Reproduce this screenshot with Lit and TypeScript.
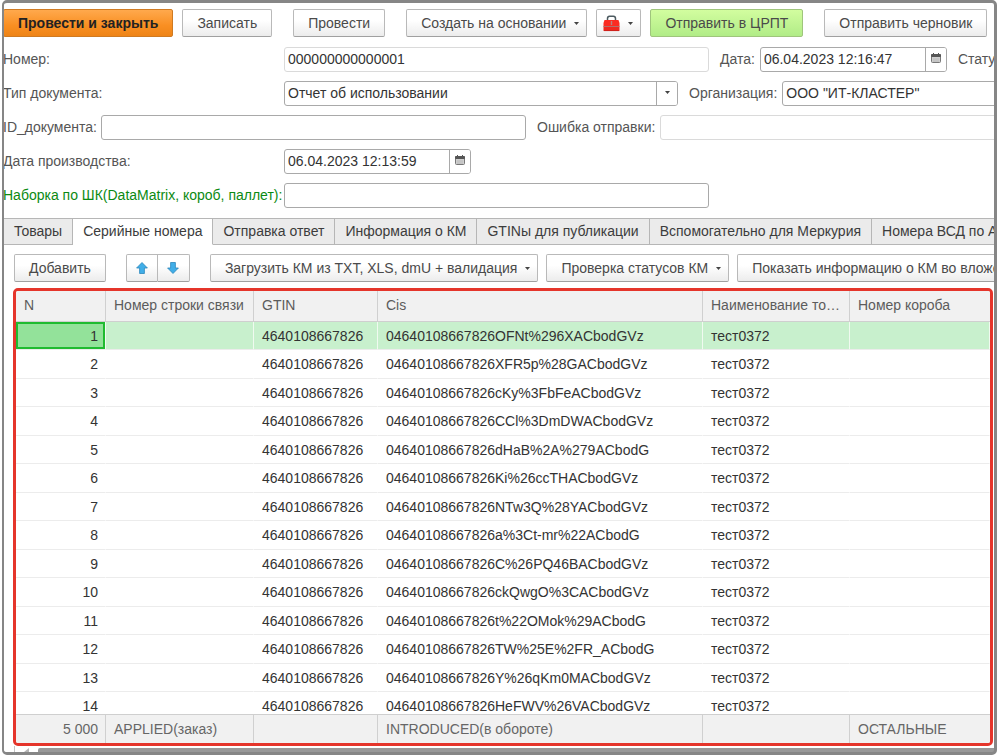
import { LitElement, html, css, svg, nothing } from "lit";
import { customElement, property, state } from "lit/decorators.js";
import { classMap } from "lit/directives/class-map.js";

const CODES = [
  "04640108667826OFNt%296XACbodGVz",
  "04640108667826XFR5p%28GACbodGVz",
  "04640108667826cKy%3FbFeACbodGVz",
  "04640108667826CCl%3DmDWACbodGVz",
  "04640108667826dHaB%2A%279ACbodG",
  "04640108667826Ki%26ccTHACbodGVz",
  "04640108667826NTw3Q%28YACbodGVz",
  "04640108667826a%3Ct-mr%22ACbodG",
  "04640108667826C%26PQ46BACbodGVz",
  "04640108667826ckQwgO%3CACbodGVz",
  "04640108667826t%22OMok%29ACbodG",
  "04640108667826TW%25E%2FR_ACbodG",
  "04640108667826Y%26qKm0MACbodGVz",
  "04640108667826HeFWV%26VACbodGVz",
];

const TABS = [
  "Товары",
  "Серийные номера",
  "Отправка ответ",
  "Информация о КМ",
  "GTINы для публикации",
  "Вспомогательно для Меркурия",
  "Номера ВСД по А",
];

const caret = html`<svg class="caret" width="5" height="3" viewBox="0 0 5 3" aria-hidden="true">
  <path d="M0 0H5L2.5 3Z" fill="#444" />
</svg>`;

const calendar = html`<svg width="10" height="11" viewBox="0 0 10 11" aria-hidden="true">
  <rect x="0.5" y="1.5" width="9" height="8" rx="1" fill="#cfcfcf" stroke="#777" />
  <rect x="0" y="1" width="10" height="3" rx="1" fill="#555" />
  <path d="M2.5 0V2M7.5 0V2" stroke="#555" />
  <path d="M2 6H8M2 8H8" stroke="#bababa" />
</svg>`;

const toolbox = html`<svg width="17" height="17" viewBox="0 0 17 17" aria-hidden="true">
  <path d="M4.5 6V3.6Q4.5 1.2 6.6 1.2H10.4Q12.5 1.2 12.5 3.6V6" fill="none" stroke="#4c5a60" stroke-width="1.5" />
  <path d="M1.5 5H15.5L16.5 8V11H0.5V8Z" fill="#fb2c22" />
  <rect x="0.5" y="11" width="16" height="5" rx="0.5" fill="#f0281f" />
  <path d="M0.5 11.5H16.5" stroke="#b0706b" />
  <path d="M1 15.6H16" stroke="#c2201a" stroke-width="0.8" />
  <path d="M8.5 6V10" stroke="#b98580" stroke-width="1.4" />
</svg>`;

const arrow = (down: boolean) => html`<svg width="12" height="12" viewBox="0 0 12 12" aria-hidden="true">
  ${svg`<path d=${down ? "M6 11.5L0.6 6H3.6V0.5H8.4V6H11.4Z" : "M6 0.5L0.6 6H3.6V11.5H8.4V6H11.4Z"}
    fill="#41aee8" stroke="#2b86bb" stroke-width="0.8" stroke-linejoin="round" />`}
</svg>`;

@customElement("app-button")
export class AppButton extends LitElement {
  @property() tone = "plain";
  @property() label = "";
  @property({ type: Boolean }) menu = false;

  static styles = css`
    :host {
      display: block;
      flex: none;
    }
    .button {
      display: flex;
      align-items: center;
      justify-content: center;
      height: 28px;
      box-sizing: border-box;
      padding: 0 14px;
      border: 1px solid #b9b9b9;
      border-bottom-color: #a0a0a0;
      border-radius: 2px;
      background: linear-gradient(#ffffff 40%, #ececec);
      color: #4a4a4a;
      font: 14px/18px "Liberation Sans", Arial, sans-serif;
      white-space: nowrap;
    }
    .menu {
      gap: 8px;
      padding: 0 7px 0 14px;
    }
    .icon {
      padding: 0 7px 0 6px;
    }
    .primary {
      border-color: #cf7a22;
      background: linear-gradient(#ffa94d, #f98f22 60%, #ee8417);
      color: #222;
      font-weight: bold;
    }
    .success {
      border-color: #9fc57c;
      background: linear-gradient(#d2fd9f, #b1ec87);
    }
    .caret {
      flex: none;
    }
  `;

  render() {
    const classes = {
      button: true,
      menu: this.menu,
      icon: !this.label,
      primary: this.tone === "primary",
      success: this.tone === "success",
    };
    return html`<button class=${classMap(classes)} type="button" aria-label=${this.label || "Сервис"}>
      <slot>${this.label}</slot>${this.menu ? caret : nothing}
    </button>`;
  }
}

@customElement("app-root")
export class AppRoot extends LitElement {
  @state() private activeTab = 1;
  @state() private selected = 0;

  static styles = css`
    :host {
      display: block;
      color: #333;
      font: 14px/18px "Liberation Sans", Arial, sans-serif;
      background: #fff;
    }
    * {
      box-sizing: border-box;
    }
    .page {
      position: relative;
      display: flex;
      flex-direction: column;
      height: 100vh;
      padding: 9px 3px 3px;
      overflow: hidden;
    }
    .page::after {
      content: "";
      position: absolute;
      inset: 0 0 0 2px;
      border: 3px solid #868686;
      border-left-width: 2px;
      border-radius: 5px;
      pointer-events: none;
    }
    .bar {
      display: flex;
      gap: 9px;
    }
    .apart {
      margin-left: 12px;
    }
    .form {
      display: grid;
      gap: 9px;
      margin: 10px 0;
    }
    .row {
      display: flex;
      align-items: center;
      height: 25px;
    }
    label {
      flex: none;
      padding-bottom: 1px;
      color: #555;
      white-space: nowrap;
    }
    .wide {
      width: 281px;
    }
    .id {
      width: 98px;
    }
    .next {
      margin: 0 5px 0 11px;
    }
    .scan {
      color: #0b8a12;
    }
    .field {
      display: flex;
      flex: none;
      height: 25px;
      border: 1px solid #a9a9a9;
      border-radius: 3px;
      overflow: hidden;
    }
    .long {
      width: 425px;
    }
    .type {
      width: 394px;
    }
    .date {
      width: 187px;
    }
    .rest {
      flex: 1 0 340px;
    }
    .quiet {
      border-color: #dadada;
    }
    .field input,
    .field select {
      flex: 1;
      min-width: 0;
      margin: 0;
      padding: 0 3px 2px;
      border: 0;
      outline: 0;
      appearance: none;
      background: transparent;
      color: #333;
      font: inherit;
    }
    .field button,
    .field .drop {
      display: flex;
      flex: none;
      align-items: center;
      justify-content: center;
      width: 21px;
      padding: 0 0 2px;
      border: 0;
      border-left: 1px solid #a9a9a9;
      background: #fff;
    }
    .tabs {
      display: flex;
      flex: none;
      margin-left: 1px;
    }
    .tab {
      flex: none;
      height: 27px;
      padding: 0 10px 2px;
      border: 1px solid #b6b6b6;
      border-left-width: 0;
      background: #ebebeb;
      color: #3c3c3c;
      font: inherit;
      white-space: nowrap;
    }
    .tab.active {
      border-bottom-color: #fff;
      background: #fff;
    }
    .tab:last-child {
      flex: 1 0 auto;
    }
    .commands {
      gap: 8px;
      margin: 9px 0 6px 11px;
    }
    .pair {
      display: flex;
    }
    .pair button {
      display: flex;
      align-items: center;
      justify-content: center;
      width: 32px;
      height: 28px;
      padding: 0;
      border: 1px solid #b9b9b9;
      border-bottom-color: #a0a0a0;
      border-radius: 2px 0 0 2px;
      background: linear-gradient(#ffffff 40%, #ececec);
    }
    .pair button + button {
      border-left: 0;
      border-radius: 0 2px 2px 0;
    }
    .grid {
      flex: 1;
      min-height: 0;
      margin: 0 1px 0 10px;
      border: 3px solid #e5352b;
      border-radius: 5px;
      overflow: hidden;
    }
    table {
      width: 100%;
      table-layout: fixed;
      border-collapse: separate;
      border-spacing: 0;
    }
    .c1 {
      width: 90px;
    }
    .c2 {
      width: 148px;
    }
    .c3 {
      width: 124px;
    }
    .c4 {
      width: 325px;
    }
    .c5 {
      width: 147px;
    }
    th,
    td {
      height: 28px;
      padding: 0 7px 0 8px;
      overflow: hidden;
      font-weight: normal;
      text-align: left;
      text-overflow: ellipsis;
      white-space: nowrap;
    }
    tbody tr:nth-child(even) td {
      height: 29px;
    }
    thead th {
      position: sticky;
      top: 0;
      height: 31px;
      padding-bottom: 2px;
      border-right: 1px solid #d0d0d0;
      border-bottom: 1px solid #cfcfcf;
      background: #f1f1f1;
      color: #5c5c5c;
    }
    tbody td {
      border-right: 1px solid transparent;
      border-bottom: 1px solid #ececec;
    }
    td.num {
      text-align: right;
    }
    .selected td {
      border-right-color: #f0faf0;
      background: #c8f0cd;
      background-clip: padding-box;
    }
    .selected td.num {
      background: #93e29a;
      box-shadow: inset 0 0 0 2px #1fbb30;
    }
    tfoot td {
      position: sticky;
      bottom: 0;
      height: 29px;
      border-top: 1px solid #cfcfcf;
      border-right: 1px solid #d0d0d0;
      background: #f1f1f1;
      color: #666;
    }
    thead th:last-child,
    tfoot td:last-child {
      border-right: 0;
    }
    .scroll {
      display: flex;
      flex: none;
      gap: 9px;
      height: 6px;
      margin-left: 11px;
      padding: 2px 0 0 9px;
      border-left: 1px solid #c4c4c4;
      overflow: hidden;
    }
    .scroll svg {
      flex: none;
    }
    .thumb {
      flex: 1;
      height: 12px;
      border-radius: 2px 0 0 0;
      background: #989898;
    }
  `;

  private dateField(id: string, value: string) {
    return html`<div class="field date">
      <input id=${id} type="text" .value=${value} />
      <button type="button" aria-label="Выбрать дату">${calendar}</button>
    </div>`;
  }

  render() {
    return html`<main class="page">
      <div class="bar">
        <app-button tone="primary" label="Провести и закрыть"></app-button>
        <app-button label="Записать"></app-button>
        <app-button class="apart" label="Провести"></app-button>
        <app-button class="apart" menu label="Создать на основании"></app-button>
        <app-button menu>${toolbox}</app-button>
        <app-button tone="success" label="Отправить в ЦРПТ"></app-button>
        <app-button class="apart" label="Отправить черновик"></app-button>
      </div>

      <form class="form">
        <div class="row">
          <label class="wide" for="number">Номер:</label>
          <div class="field long quiet"><input id="number" type="text" value="000000000000001" /></div>
          <label class="next" for="date">Дата:</label>
          ${this.dateField("date", "06.04.2023 12:16:47")}
          <label class="next">Стату</label>
        </div>
        <div class="row">
          <label class="wide" for="type">Тип документа:</label>
          <div class="field type">
            <select id="type">
              <option>Отчет об использовании</option>
            </select>
            <span class="drop">${caret}</span>
          </div>
          <label class="next" for="org">Организация:</label>
          <div class="field rest"><input id="org" type="text" value='ООО "ИТ-КЛАСТЕР"' /></div>
        </div>
        <div class="row">
          <label class="id" for="docid">ID_документа:</label>
          <div class="field long"><input id="docid" type="text" /></div>
          <label class="next" for="error">Ошибка отправки:</label>
          <div class="field rest quiet"><input id="error" type="text" readonly /></div>
        </div>
        <div class="row">
          <label class="wide" for="made">Дата производства:</label>
          ${this.dateField("made", "06.04.2023 12:13:59")}
        </div>
        <div class="row">
          <label class="wide scan" for="scan">Наборка по ШК(DataMatrix, короб, паллет):</label>
          <div class="field long"><input id="scan" type="text" /></div>
        </div>
      </form>

      <div class="tabs" role="tablist">
        ${TABS.map(
          (name, i) => html`<button
            class=${classMap({ tab: true, active: i === this.activeTab })}
            type="button"
            role="tab"
            aria-selected=${i === this.activeTab}
            @click=${() => (this.activeTab = i)}
          >${name}</button>`
        )}
      </div>

      <div class="bar commands">
        <app-button label="Добавить"></app-button>
        <div class="pair apart">
          <button type="button" aria-label="Переместить вверх">${arrow(false)}</button>
          <button type="button" aria-label="Переместить вниз">${arrow(true)}</button>
        </div>
        <app-button class="apart" menu label="Загрузить КМ из TXT, XLS, dmU + валидация"></app-button>
        <app-button menu label="Проверка статусов КМ"></app-button>
        <app-button label="Показать информацию о КМ во вложе"></app-button>
      </div>

      <div class="grid">
        <table>
          <colgroup>
            <col class="c1" />
            <col class="c2" />
            <col class="c3" />
            <col class="c4" />
            <col class="c5" />
            <col />
          </colgroup>
          <thead>
            <tr>
              <th>N</th>
              <th>Номер строки связи</th>
              <th>GTIN</th>
              <th>Cis</th>
              <th>Наименование товара</th>
              <th>Номер короба</th>
            </tr>
          </thead>
          <tbody>
            ${CODES.map(
              (code, i) => html`<tr
                class=${classMap({ selected: i === this.selected })}
                @click=${() => (this.selected = i)}
              >
                <td class="num">${i + 1}</td>
                <td></td>
                <td>4640108667826</td>
                <td>${code}</td>
                <td>тест0372</td>
                <td></td>
              </tr>`
            )}
          </tbody>
          <tfoot>
            <tr>
              <td class="num">5 000</td>
              <td>APPLIED(заказ)</td>
              <td></td>
              <td>INTRODUCED(в обороте)</td>
              <td></td>
              <td>ОСТАЛЬНЫЕ</td>
            </tr>
          </tfoot>
        </table>
      </div>
      <div class="scroll" aria-hidden="true">
        <svg width="5" height="8" viewBox="0 0 5 8"><path d="M5 0V8L0 4Z" fill="#b5b5b5" /></svg>
        <div class="thumb"></div>
      </div>
    </main>`;
  }
}
